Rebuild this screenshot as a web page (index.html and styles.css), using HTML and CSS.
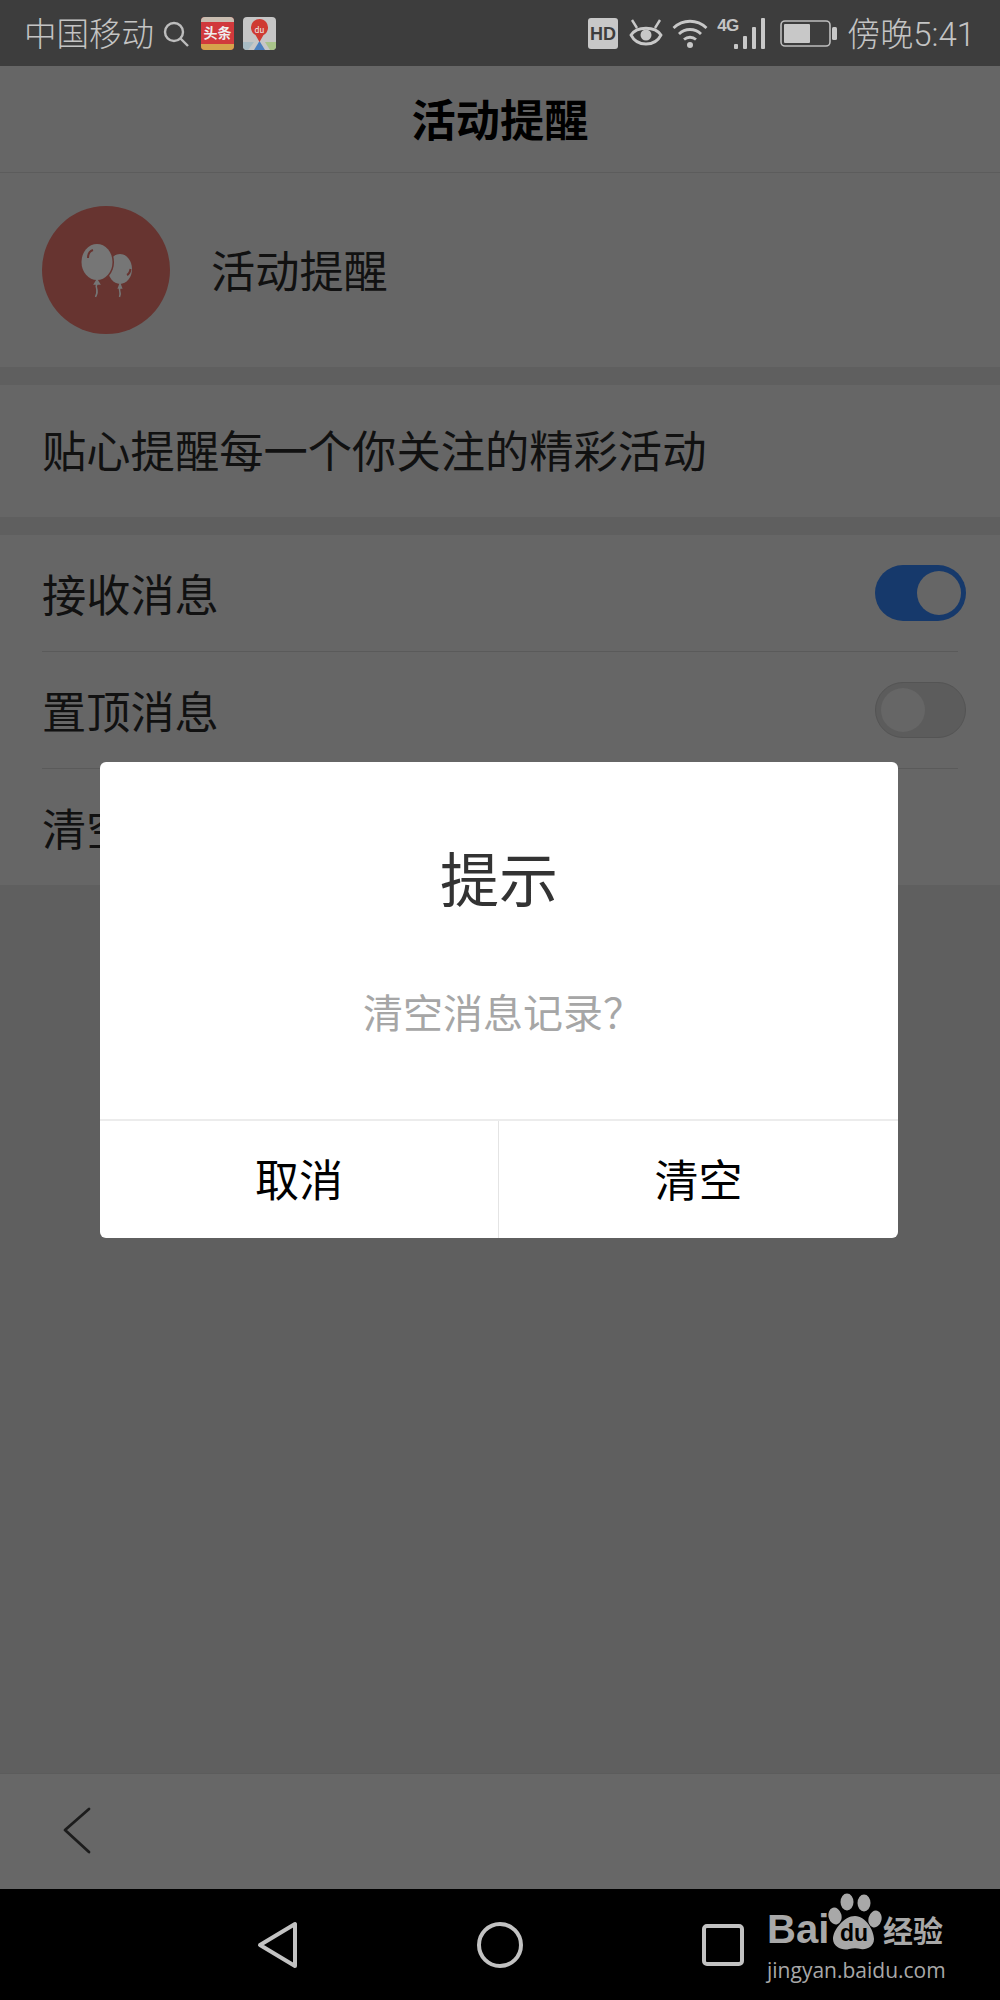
FILE: index.html
```html
<!DOCTYPE html>
<html lang="zh-CN">
<head>
  <meta charset="UTF-8">
  <meta name="viewport" content="width=device-width, initial-scale=1.0">
  <title>活动提醒</title>
  <link rel="stylesheet" href="styles.css">
</head>
<body>
  <div id="app">
    <div class="status-bar">
      <div class="status-left">
        <span class="carrier">中国移动</span>
        <svg class="ic-search" width="26" height="26" viewBox="0 0 26 26"><circle cx="11" cy="11" r="9" fill="none" stroke="#bdbdbd" stroke-width="2.4"/><path d="M17.5 17.5L25 25" stroke="#bdbdbd" stroke-width="2.4"/></svg>
        <svg class="ic-app" width="33" height="33" viewBox="0 0 33 33">
          <rect width="33" height="33" rx="4" fill="#d1393c"/>
          <path d="M0 4a4 4 0 0 1 4-4h25a4 4 0 0 1 4 4v1H0z" fill="#c9bdb0"/>
          <path d="M0 27h33v2a4 4 0 0 1-4 4H4a4 4 0 0 1-4-4z" fill="#d6a24c"/>
          <text x="16.500" y="21" text-anchor="middle" class="app-text">头条</text>
        </svg>
        <svg class="ic-app" width="33" height="33" viewBox="0 0 33 33">
          <rect width="33" height="33" rx="4" fill="#c6c6c6"/>
          <path d="M0 25h11l-6 8H4a4 4 0 0 1-4-4z" fill="#a9bcc4"/>
          <path d="M22 25h11v4a4 4 0 0 1-4 4h-2z" fill="#a9c48a"/>
          <path d="M11 33l5.500-9 5.500 9z" fill="#4a7fc0"/>
          <path d="M16.500 25l-4-7a8.500 8.500 0 1 1 8 0z" fill="#cf3a32"/>
          <text x="16.500" y="16" text-anchor="middle" class="map-text">du</text>
        </svg>
      </div>
      <div class="status-right">
        <svg width="30" height="31" viewBox="0 0 30 31"><rect width="30" height="31" rx="3" fill="#c8c8c8"/><text x="15" y="22" text-anchor="middle" class="hd-text">HD</text></svg>
        <svg class="ic-eye" width="34" height="30" viewBox="0 0 34 30" fill="none" stroke="#c8c8c8" stroke-width="2.800">
          <path d="M2 17C8 8 26 8 32 17C26 29 8 29 2 17z"/>
          <circle cx="17" cy="17" r="5.500" fill="#c8c8c8" stroke="none"/>
          <path d="M3 2l5 8M31 2l-5 8" stroke-width="2.400"/>
        </svg>
        <svg class="ic-wifi" width="36" height="30" viewBox="0 0 36 30" fill="none" stroke="#c8c8c8" stroke-width="2.800">
          <path d="M1.500 10C11 1 25 1 34.500 10"/>
          <path d="M7 16C13 10 23 10 29 16"/>
          <path d="M12 21.500C15.500 18.500 20.500 18.500 24 21.500"/>
          <circle cx="18" cy="27" r="3" fill="#c8c8c8" stroke="none"/>
        </svg>
        <div class="signal">
          <span class="net">4G</span>
          <svg width="32" height="31" viewBox="0 0 32 31" fill="#c8c8c8"><rect x="0" y="26" width="4" height="5" rx="1"/><rect x="9" y="18" width="4" height="13" rx="1"/><rect x="18" y="9" width="4" height="22" rx="1"/><rect x="27" y="0" width="4" height="31" rx="1"/></svg>
        </div>
        <svg class="ic-batt" width="57" height="27" viewBox="0 0 57 27">
          <rect x="1" y="1" width="49" height="25" rx="4" fill="none" stroke="#bdbdbd" stroke-width="1.600"/>
          <rect x="4" y="4" width="26" height="19" rx="1" fill="#c8c8c8"/>
          <rect x="52" y="7" width="5" height="13" rx="1.500" fill="#c8c8c8"/>
        </svg>
        <span class="clock">傍晚5:41</span>
      </div>
    </div>

    <div class="title-bar">活动提醒</div>

    <div class="profile">
      <div class="avatar">
        <svg width="128" height="128" viewBox="0 0 128 128">
          <ellipse cx="78" cy="63" rx="12" ry="15" fill="#767676"/>
          <path d="M78 78l-1.500 4h3zM78 82c-2 3 2 4-.5 9" fill="#767676" stroke="#767676" stroke-width="1.500"/>
          <ellipse cx="55" cy="56" rx="17" ry="19.500" fill="#673430"/>
          <ellipse cx="55" cy="56" rx="15.500" ry="18" fill="#767676"/>
          <path d="M55 74l-2.500 4h5zM55 78c-3 4 3 5-1.500 13" fill="#767676" stroke="#767676" stroke-width="1.500"/>
          <path d="M46 52c0-4 2-7 5-8" fill="none" stroke="#673430" stroke-width="2"/>
          <path d="M85 69c2-1 3-3 3.500-6" fill="none" stroke="#673430" stroke-width="2"/>
        </svg>
      </div>
      <span class="profile-name">活动提醒</span>
    </div>

    <div class="desc">贴心提醒每一个你关注的精彩活动</div>

    <div class="settings">
      <div class="row">
        <span>接收消息</span>
        <span class="switch on"><i class="knob"></i></span>
      </div>
      <div class="row">
        <span>置顶消息</span>
        <span class="switch off"><i class="knob"></i></span>
      </div>
      <div class="row last">
        <span>清空消息记录</span>
      </div>
    </div>

    <div class="spacer"></div>

    <div class="toolbar">
      <svg width="30" height="48" viewBox="0 0 30 48" fill="none" stroke="#1c1c1c" stroke-width="2.800" stroke-linecap="round" stroke-linejoin="round"><path d="M26 2L2 23L26 45"/></svg>
    </div>

    <div class="nav-bar">
      <svg width="42" height="48" viewBox="0 0 42 48" fill="none" stroke="#c2c2c2" stroke-width="4" stroke-linejoin="round"><path d="M38 3V45L3 24z"/></svg>
      <svg width="46" height="46" viewBox="0 0 46 46" fill="none" stroke="#c2c2c2" stroke-width="4"><circle cx="23" cy="23" r="21"/></svg>
      <svg width="42" height="42" viewBox="0 0 42 42" fill="none" stroke="#c2c2c2" stroke-width="4"><rect x="2" y="2" width="38" height="38" rx="3"/></svg>
    </div>

    <div class="dialog">
      <div class="dialog-body">
        <div class="dialog-title">提示</div>
        <div class="dialog-msg">清空消息记录？</div>
      </div>
      <div class="dialog-btns">
        <div class="btn">取消</div>
        <div class="btn">清空</div>
      </div>
    </div>

    <div class="watermark">
      <div class="wm-top">
        <span class="wm-bai">Bai</span>
        <svg class="wm-paw" width="54" height="58" viewBox="0 0 54 58" fill="#a8a8a8">
          <ellipse cx="19" cy="9" rx="6.500" ry="8.500"/>
          <ellipse cx="36" cy="10" rx="6.500" ry="8.500"/>
          <ellipse cx="7" cy="23" rx="6.500" ry="8.500" transform="rotate(-15 7 23)"/>
          <ellipse cx="47" cy="26" rx="6.500" ry="8.500" transform="rotate(15 47 26)"/>
          <path d="M27 23C38 23 46 38 46 46C46 54 38 57 33 56C29 55 25 55 21 56C15 58 5 54 5 46C5 37 16 23 27 23z"/>
          <text x="26" y="48" text-anchor="middle" class="paw-text">du</text>
        </svg>
        <span class="wm-cn">经验</span>
      </div>
      <div class="wm-url">jingyan.baidu.com</div>
    </div>
  </div>
</body>
</html>
```

FILE: styles.css
```css
html, body {
  margin: 0;
  padding: 0;
}

body {
  font-family: "Liberation Sans", "Noto Sans CJK SC", sans-serif;
}

#app {
  position: relative;
  width: 1000px;
  height: 2000px;
  display: flex;
  flex-direction: column;
  overflow: hidden;
  background-color: #5f5f5f;
  color: #111;
  font-family: "Noto Sans CJK SC", sans-serif;
}

.status-bar {
  height: 66px;
  flex: none;
  display: flex;
  justify-content: space-between;
  align-items: center;
  padding: 0 25px 0 24px;
  background-color: #3d3d3d;
  color: #c4c4c4;
}

.status-left,
.status-right {
  display: flex;
  align-items: center;
}

.carrier,
.clock {
  padding-top: 4px;
  font-family: Roboto, "Noto Sans CJK SC", sans-serif;
  font-size: 32.5px;
  line-height: 40px;
  font-weight: 300;
}

.ic-search {
  margin: 2px 12px 0 9px;
}

.ic-app {
  margin-right: 9px;
}

.app-text {
  font-size: 14px;
  font-weight: 700;
  fill: #eee;
}

.map-text {
  font-size: 8px;
  fill: #eee;
}

.hd-text {
  font-family: "Liberation Sans", sans-serif;
  font-size: 18px;
  font-weight: 700;
  fill: #3d3d3d;
}

.ic-eye {
  margin-left: 11px;
}

.ic-wifi {
  margin-left: 9px;
}

.signal {
  display: flex;
  align-items: flex-start;
  margin-left: 9px;
}

.net {
  width: 17px;
  font-family: "Liberation Sans Narrow", "Liberation Sans", sans-serif;
  font-size: 17px;
  font-weight: 700;
  line-height: 16px;
  letter-spacing: -0.5px;
}

.ic-batt {
  margin-left: 14px;
}

.clock {
  margin-left: 10px;
  font-size: 33px;
}

.title-bar {
  height: 106px;
  flex: none;
  border-bottom: 1px solid #5c5c5c;
  background-color: #666;
  color: #000;
  font-size: 44.2px;
  font-weight: 700;
  line-height: 104px;
  text-align: center;
}

.profile {
  height: 194px;
  flex: none;
  display: flex;
  align-items: center;
  padding-left: 42px;
  background-color: #666;
  font-size: 44.2px;
}

.avatar {
  width: 128px;
  height: 128px;
  border-radius: 50%;
  background-color: #673430;
}

.avatar svg {
  display: block;
}

.profile-name {
  margin-left: 41px;
  margin-top: -2px;
}

.desc {
  height: 132px;
  flex: none;
  margin-top: 18px;
  padding-left: 42px;
  background-color: #666;
  font-size: 44.3px;
  line-height: 128px;
}

.settings {
  flex: none;
  margin-top: 18px;
  padding: 0 42px;
  background-color: #666;
  font-size: 44.2px;
}

.row {
  height: 117px;
  box-sizing: border-box;
  display: flex;
  justify-content: space-between;
  align-items: center;
  border-bottom: 1px solid #5a5a5a;
}

.row.last {
  height: 116px;
  border-bottom: none;
}

.switch {
  width: 91px;
  height: 56px;
  box-sizing: border-box;
  display: flex;
  align-items: center;
  margin-right: -8px;
  border-radius: 28px;
}

.switch.on {
  justify-content: flex-end;
  padding-right: 5px;
  background-color: #16396b;
}

.switch.off {
  padding-left: 5px;
  border: 1px solid #545454;
  background-color: #5c5c5c;
}

.knob {
  width: 44px;
  height: 44px;
  border-radius: 50%;
  background-color: #666;
}

.spacer {
  flex: 1;
}

.toolbar {
  height: 116px;
  flex: none;
  box-sizing: border-box;
  display: flex;
  align-items: center;
  padding-left: 63px;
  padding-bottom: 2px;
  border-top: 1px solid #5c5c5c;
  background-color: #676767;
}

.nav-bar {
  height: 111px;
  flex: none;
  display: flex;
  align-items: center;
  padding-left: 257px;
  gap: 180px;
  background-color: #000;
}

.nav-bar svg:nth-child(2) {
  margin-left: -2px;
}

.nav-bar svg:nth-child(3) {
  margin-left: -1px;
}

/* dialog sits on top of the dimmed page */
.dialog {
  position: absolute;
  left: 100px;
  top: 762px;
  width: 798px;
  height: 476px;
  display: flex;
  flex-direction: column;
  border-radius: 6px;
  background-color: #fff;
  overflow: hidden;
}

.dialog-body {
  height: 357px;
  box-sizing: border-box;
  padding-top: 75px;
  text-align: center;
}

.dialog-title {
  color: #333;
  font-size: 59px;
  line-height: 80px;
}

.dialog-msg {
  margin-top: 67px;
  padding-left: 8px;
  color: #a6a6a6;
  font-size: 40px;
  line-height: 54px;
}

.dialog-btns {
  flex: 1;
  display: flex;
  border-top: 2px solid #ececec;
}

.btn {
  width: 398px;
  flex: none;
  display: flex;
  justify-content: center;
  align-items: center;
  padding-bottom: 4px;
  color: #000;
  font-size: 44px;
}

.btn + .btn {
  width: 399px;
  border-left: 1px solid #e4e4e4;
}

.watermark {
  position: absolute;
  left: 767px;
  top: 1893px;
  width: 180px;
  color: #a8a8a8;
}

.wm-top {
  display: flex;
  align-items: flex-end;
  height: 58px;
}

.wm-bai {
  width: 61px;
  font-family: "Liberation Sans", sans-serif;
  font-size: 40px;
  font-weight: 700;
  line-height: 44px;
}

.wm-paw {
  flex: none;
}

.paw-text {
  font-family: "Liberation Sans", sans-serif;
  font-size: 23px;
  font-weight: 700;
  fill: #000;
}

.wm-cn {
  margin-left: 1px;
  font-size: 30px;
  font-weight: 700;
  line-height: 44px;
}

.wm-url {
  margin-top: 5px;
  font-family: "Open Sans", sans-serif;
  font-size: 21px;
  line-height: 28px;
  white-space: nowrap;
}
```
